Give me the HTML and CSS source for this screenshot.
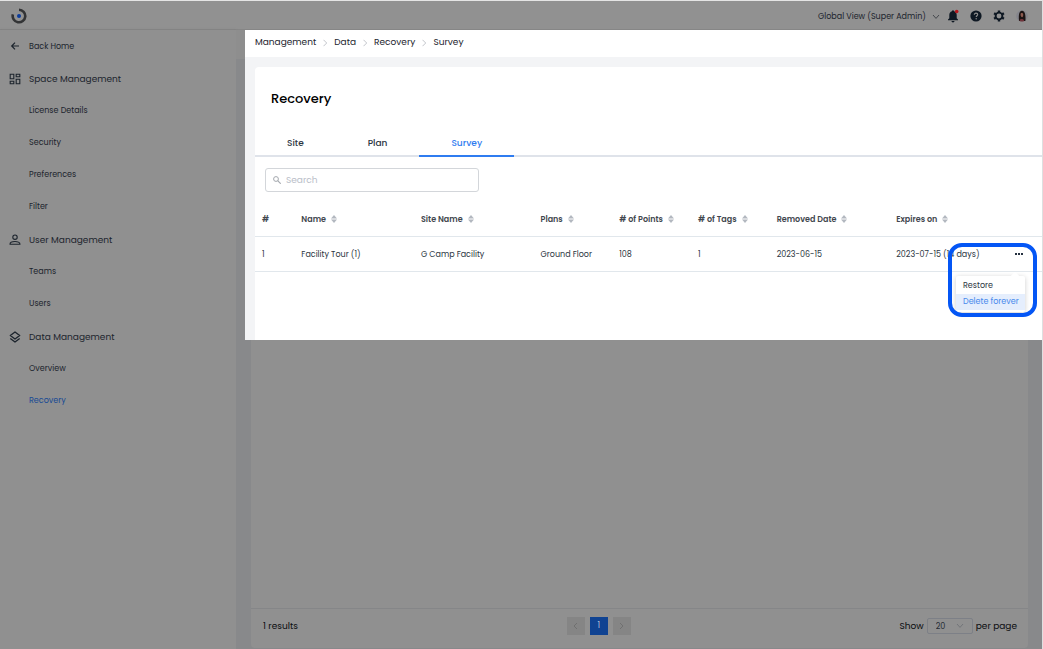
FILE: index.html
```html
<!DOCTYPE html>
<html lang="en">
<head>
<meta charset="utf-8">
<meta name="viewport" content="width=device-width, initial-scale=1">
<title>Recovery</title>
<link rel="stylesheet" href="styles.css">
</head>
<body>
<svg class="defs" aria-hidden="true">
  <symbol id="sort" viewBox="0 0 6 8"><path d="M3 0 6 3.400H0zM3 8 0 4.600h6z" fill="#b3b8c0"/></symbol>
  <symbol id="sep" viewBox="0 0 4 8"><path d="M.5.8 3.700 4 .5 7.200" fill="none" stroke="#b4b8be" stroke-width=".8"/></symbol>
</svg>
<header class="topbar">
  <a class="logo" href="#" aria-label="Home">
    <svg viewBox="0 0 16 16" width="16" height="16"><path d="M8 1.700A6.300 6.300 0 1 1 1.900 6.300" fill="none" stroke="#333436" stroke-width="2.600"/><circle cx="8" cy="8" r="2" fill="#0b3c9c"/></svg>
  </a>
  <div class="tools">
    <button class="view" type="button">Global View (Super Admin)
      <svg viewBox="0 0 8 6" width="8" height="6"><path d="M1 1l3 3.400L7 1" fill="none" stroke="#30353b" stroke-width=".8"/></svg>
    </button>
    <button class="tool" type="button" aria-label="Notifications">
      <svg viewBox="0 0 12 14" width="12" height="14"><path d="M5 2.200C5 1.600 5.400 1.300 6 1.300s1 .3 1 .9C8.900 2.700 9.700 4.200 9.700 6v3.200L11 10.500V11.300H1V10.500L2.300 9.200V6C2.300 4.200 3.100 2.700 5 2.200zM4.500 12h3c0 .8-.6 1.400-1.500 1.400S4.500 12.800 4.500 12z" fill="#0e1823"/><circle cx="9.700" cy="2.500" r="1.800" fill="#b5161c"/></svg>
    </button>
    <button class="tool" type="button" aria-label="Help">
      <svg viewBox="0 0 12 12" width="12" height="12"><circle cx="6" cy="6" r="5.600" fill="#0e1823"/><path d="M4.300 4.800C4.300 3.700 5 3.100 6 3.100s1.700.6 1.700 1.500c0 1.200-1.500 1.200-1.500 2.500" fill="none" stroke="#919191" stroke-width="1.100"/><circle cx="6.200" cy="8.700" r=".7" fill="#919191"/></svg>
    </button>
    <button class="tool" type="button" aria-label="Settings">
      <svg viewBox="0 0 12 12" width="12" height="12"><circle cx="6" cy="6" r="3.400" fill="none" stroke="#0e1823" stroke-width="1.900"/><path d="M6 .4v2M6 9.600v2M1.100 3.200l1.700 1M9.200 7.800l1.700 1M1.100 8.800l1.700-1M9.200 4.200l1.700-1" stroke="#0e1823" stroke-width="2.400"/></svg>
    </button>
    <button class="tool" type="button" aria-label="Account">
      <svg viewBox="0 0 12 12" width="12" height="12"><circle cx="6" cy="6" r="5.800" fill="#85868d"/><path d="M3 11C2.500 6 2.700 1 6 .8 9.400 1 9.700 6 9.400 11z" fill="#1b1414"/><path d="M4.700 3.500c1-.8 2.300-.4 2.500.7.200 1.500-.3 2.800-1.200 3.100C4.800 7 4.300 5 4.700 3.500z" fill="#8c5b50"/><path d="M3.400 10.300c.8-1.500 3.600-1.800 4.700 0L7.500 11.500h-3z" fill="#70343a"/></svg>
    </button>
  </div>
</header>
<div class="shell">
  <nav class="sidebar" aria-label="Settings">
    <a class="row" href="#"><svg class="ico" viewBox="0 0 12 12"><path d="M6 1.700 2.700 5 6 8.300M2.700 5H10" fill="none" stroke="#1c242d" stroke-width="1.200"/></svg>Back Home</a>
    <div class="group">
      <a class="row head" href="#"><svg class="ico" viewBox="0 0 12 12"><path d="M1.200 1.200h3.600v4.600H1.200zM7.200 1.200h3.600v2.600H7.200zM1.200 8.200h3.600v2.600H1.200zM7.200 6.200h3.600v4.600H7.200z" fill="none" stroke="#1c242d" stroke-width="1.100"/></svg>Space Management</a>
      <a class="row" href="#">License Details</a>
      <a class="row" href="#">Security</a>
      <a class="row" href="#">Preferences</a>
      <a class="row" href="#">Filter</a>
    </div>
    <div class="group">
      <a class="row head" href="#"><svg class="ico" viewBox="0 0 12 12"><circle cx="6" cy="3.200" r="2.200" fill="none" stroke="#1c242d" stroke-width="1.100"/><path d="M1 10.200C1 6.500 11 6.500 11 10.200z" fill="none" stroke="#1c242d" stroke-width="1.100" stroke-linejoin="round"/></svg>User Management</a>
      <a class="row" href="#">Teams</a>
      <a class="row" href="#">Users</a>
    </div>
    <div class="group">
      <a class="row head" href="#"><svg class="ico" viewBox="0 0 12 12"><path d="M6 .9 10.700 4.500 6 8.100 1.300 4.500zM1.300 7.400 6 11l4.700-3.600" fill="none" stroke="#1c242d" stroke-width="1.300" stroke-linejoin="round"/></svg>Data Management</a>
      <a class="row" href="#">Overview</a>
      <a class="row current" href="#" aria-current="page">Recovery</a>
    </div>
  </nav>
  <main class="main">
    <section class="lit">
      <nav class="crumbs" aria-label="Breadcrumb">
        <a href="#">Management</a><svg class="sep"><use href="#sep"/></svg>
        <a href="#">Data</a><svg class="sep"><use href="#sep"/></svg>
        <a href="#">Recovery</a><svg class="sep"><use href="#sep"/></svg>
        <a href="#" class="here">Survey</a>
      </nav>
      <div class="canvas">
        <div class="card">
          <h1>Recovery</h1>
          <div class="tabs" role="tablist">
            <button type="button" role="tab">Site</button>
            <button type="button" role="tab">Plan</button>
            <button type="button" role="tab" class="on" aria-selected="true">Survey</button>
          </div>
          <label class="search">
            <svg viewBox="0 0 8 8" width="8" height="8"><circle cx="3" cy="3" r="2.400" fill="none" stroke="#a3a7ad" stroke-width="1"/><path d="M4.700 4.700 7.700 7.700" stroke="#a3a7ad" stroke-width="1.100"/></svg>
            <input type="search" placeholder="Search" aria-label="Search">
          </label>
          <table>
            <colgroup><col class="c-num"><col class="c-wide"><col class="c-wide"><col class="c-slim"><col class="c-slim"><col class="c-slim"><col class="c-wide"><col class="c-exp"><col></colgroup>
            <thead><tr>
              <th>#</th>
              <th>Name<svg class="sort"><use href="#sort"/></svg></th>
              <th>Site Name<svg class="sort"><use href="#sort"/></svg></th>
              <th>Plans<svg class="sort"><use href="#sort"/></svg></th>
              <th># of Points<svg class="sort"><use href="#sort"/></svg></th>
              <th># of Tags<svg class="sort"><use href="#sort"/></svg></th>
              <th>Removed Date<svg class="sort"><use href="#sort"/></svg></th>
              <th>Expires on<svg class="sort"><use href="#sort"/></svg></th>
              <th></th>
            </tr></thead>
            <tbody><tr>
              <td>1</td><td>Facility Tour (1)</td><td>G Camp Facility</td><td>Ground Floor</td><td>108</td><td>1</td><td>2023-06-15</td><td>2023-07-15 (14 days)</td>
              <td class="actions">
                <button class="more" type="button" aria-label="More actions"><svg viewBox="0 0 8 2" width="8" height="2"><path d="M0 0h2v2H0zM3 0h2v2H3zM6 0h2v2H6z" fill="#263140"/></svg></button>
                <div class="menu" role="menu">
                  <button type="button" role="menuitem">Restore</button>
                  <button type="button" role="menuitem" class="active">Delete forever</button>
                </div>
                <div class="ring"></div>
              </td>
            </tr></tbody>
          </table>
        </div>
      </div>
    </section>
    <section class="rest">
      <footer class="foot">
        <span>1 results</span>
        <div class="pager">
          <button type="button" aria-label="Previous page"><svg viewBox="0 0 5 8" width="5" height="8"><path d="M4 1 1 4l3 3" fill="none" stroke="#6b6b6b" stroke-width=".8"/></svg></button>
          <button type="button" class="page">1</button>
          <button type="button" aria-label="Next page"><svg viewBox="0 0 5 8" width="5" height="8"><path d="M1 1l3 3-3 3" fill="none" stroke="#6b6b6b" stroke-width=".8"/></svg></button>
        </div>
        <div class="size">
          <label for="size">Show</label>
          <span class="pick"><select id="size"><option>20</option></select><svg viewBox="0 0 8 6" width="8" height="6"><path d="M1 1l3 3.400L7 1" fill="none" stroke="#6a6d72" stroke-width=".8"/></svg></span>
          <span>per page</span>
        </div>
      </footer>
    </section>
  </main>
</div>
</body>
</html>
```
FILE: styles.css
```css
* { box-sizing: border-box; }
body {
  margin: 0;
  min-height: 100vh;
  display: flex;
  flex-direction: column;
  border-top: 1px solid #e4e4e4;
  border-right: 1px solid #dedfe0;
  background: #88898b;
  font-family: Poppins, Inter, "Liberation Sans", sans-serif;
  font-size: 8px;
  color: #1c242d;
}
a { color: inherit; text-decoration: none; }
button, input, select { font: inherit; color: inherit; margin: 0; padding: 0; border: 0; background: none; }
svg { display: block; flex: none; }
.defs { width: 0; height: 0; position: absolute; }

.topbar {
  height: 29px;
  display: flex;
  align-items: center;
  justify-content: space-between;
  padding: 2px 14px 0 11px;
  background: #919191;
  border-bottom: 1px solid #868686;
}
.tools { display: flex; align-items: center; gap: 11px; }
.view { display: flex; align-items: center; gap: 6px; margin-right: -4px; padding-top: 1px; }

.shell { flex: 1; display: flex; }
.sidebar { flex: none; width: 236px; padding-top: 1px; background: #909090; box-shadow: 0 0 2px #7c7c7c; }
.group { margin-bottom: 1px; }
.row { height: 32px; display: flex; align-items: center; padding-left: 29px; }
.row .ico { width: 12px; height: 12px; margin: 0 8px 0 -20px; }
.row.head { font-size: 9px; }
.row.current { color: #174a94; }

.main { flex: 1; min-width: 0; display: flex; flex-direction: column; padding-left: 9px; background: linear-gradient(#8e8e8e 29px, #88898b 29px); }
.lit { background: #fff; }
.crumbs { height: 27px; display: flex; align-items: center; gap: 7px; padding: 0 10px 2px; font-size: 9px; }
.sep { width: 4px; height: 8px; }
.canvas { background: #f3f4f6; padding: 10px 0 0 10px; }
.card { background: #fff; border-radius: 4px 0 0; padding-bottom: 68px; color: #2c3642; }
h1 { margin: 0; padding: 22px 16px 0; font-size: 13px; line-height: 20px; font-weight: 500; color: #000; }
.tabs { display: flex; margin-top: 21px; border-bottom: 2px solid #dfe3ea; font-size: 9px; font-weight: 500; }
.tabs button { height: 27px; padding: 1px 32px 0; margin-bottom: -2px; border-bottom: 2px solid transparent; }
.tabs .on { color: #2f7cf0; border-color: #2f7cf0; }
.search { display: flex; align-items: center; gap: 5px; width: 214px; height: 24px; margin: 11px 0 0 10px; padding: 0 7px; border: 1px solid #d3d6da; border-radius: 3px; font-size: 9px; }
.search input { flex: 1; min-width: 0; outline: 0; }
.search input::placeholder { color: #b9bec8; opacity: 1; }

table { width: 100%; margin-top: 9px; table-layout: fixed; border-collapse: collapse; }
th, td { height: 35px; padding: 3px 0 0 7px; text-align: left; white-space: nowrap; border-bottom: 1px solid #e1e7ec; }
th { font-weight: 600; color: #42474e; }
.sort { display: inline-block; width: 6px; height: 8px; margin-left: 5px; vertical-align: -1px; }
.c-num { width: 5%; }
.c-wide { width: 15.2%; }
.c-slim { width: 10%; }
.c-exp { width: 13.8%; }
.actions { position: relative; }
.more { display: block; margin-left: auto; margin-right: 19px; padding: 3px 0 5px; }
.menu { position: absolute; top: 39px; right: 17px; width: 69px; padding: 2px 0; background: #fff; border-radius: 2px; box-shadow: 0 1px 5px #0003; }
.menu::before { content: ""; position: absolute; top: -3px; right: 7px; width: 6px; height: 6px; background: #fff; transform: rotate(45deg); }
.menu button { position: relative; display: block; width: 100%; height: 16px; padding-left: 7px; text-align: left; white-space: nowrap; }
.menu .active { background: #e5eefd; color: #4589ec; }
.ring { position: absolute; top: 6px; right: 5px; width: 89px; height: 74px; border: 4px solid #0456f5; border-radius: 14px; pointer-events: none; }

.rest { flex: 1; display: flex; flex-direction: column; justify-content: flex-end; margin: 0 14px 1px 6px; background: #909090; border-radius: 0 0 4px 4px; }
.foot { display: flex; align-items: center; justify-content: space-between; height: 40px; padding: 0 11px 5px 12px; border-top: 1px solid #858688; font-size: 9px; color: #0a0c0f; }
.pager, .size { display: flex; align-items: center; }
.pager { gap: 5px; }
.pager button { width: 18px; height: 18px; display: flex; align-items: center; justify-content: center; background: #858585; font-size: 8px; }
.pager .page { background: #104392; color: #b8c4d8; }
.size { gap: 3px; }
.pick { display: flex; align-items: center; width: 46px; height: 16px; padding: 0 8px; border: 1px solid #7d8087; border-radius: 2px; font-size: 8px; color: #252b33; }
.pick select { flex: 1; min-width: 0; appearance: none; }
```
